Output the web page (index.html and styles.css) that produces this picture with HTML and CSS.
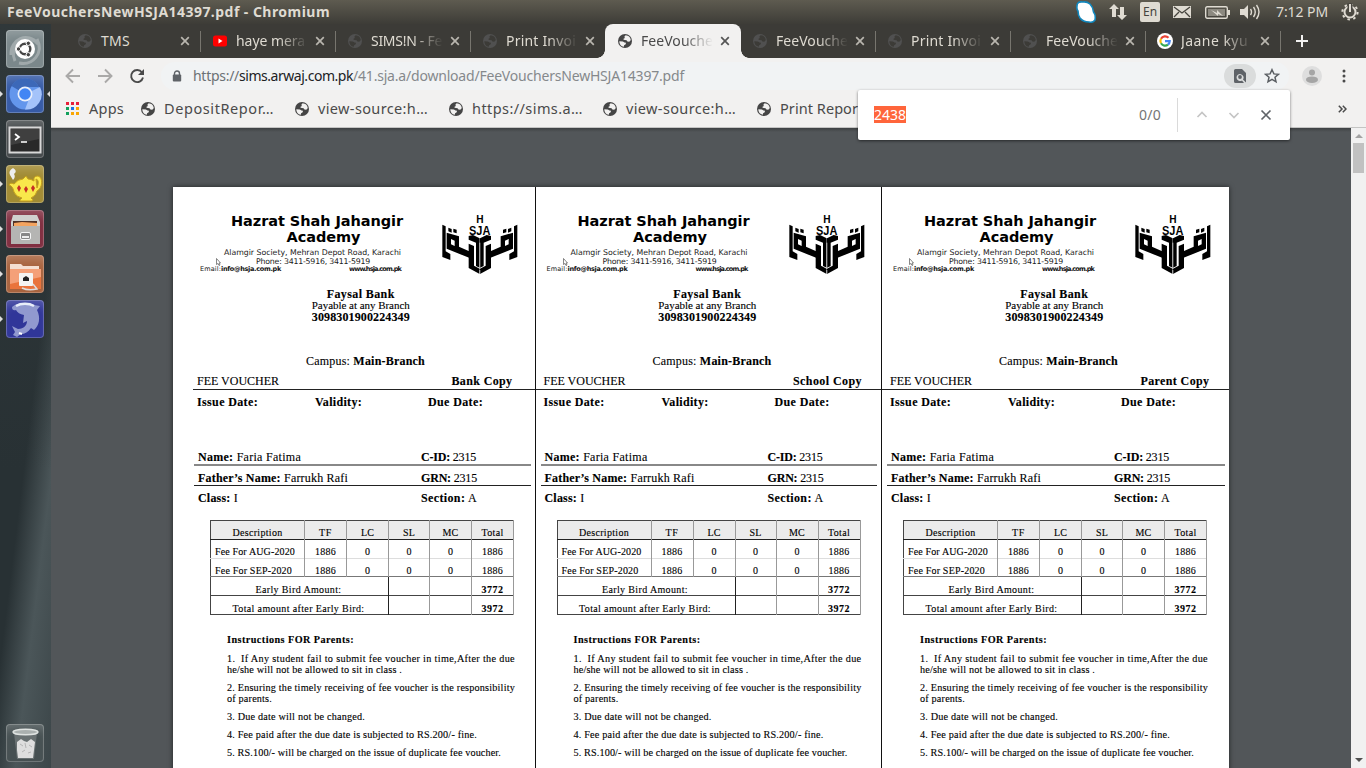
FILE: index.html
```html
<!DOCTYPE html>
<html lang="en">
<head>
<meta charset="utf-8">
<title>FeeVouchersNewHSJA14397.pdf - Chromium</title>
<link rel="stylesheet" href="styles.css">
</head>
<body>
<svg class="defs" width="0" height="0">
  <symbol id="globe" viewBox="0 0 14 14"><circle cx="7" cy="7" r="7" fill="currentColor"/><path d="M7.600 1.200 6.200 3l.9 1.100-1.400.5-.2 1.200 3 .4 1.300 1.600 1.900-.3 1.100-1.600A5.600 5.600 0 0 0 7.600 1.200zM1.300 7.200l3.600.2 1.600 1 1.500.3-.3 1.600-1.600.9-.2 1.600A5.600 5.600 0 0 1 1.300 7.200z" class="globe-land"/></symbol>
  <symbol id="close" viewBox="0 0 10 10"><path d="M1.200 1.200l7.600 7.600M8.800 1.200L1.200 8.800" fill="none" stroke="currentColor" stroke-width="1.700"/></symbol>
  <symbol id="logo" viewBox="36 26 228 180">
    <g id="half">
      <path d="M37 58l10 5v75l14 8v18l-24-9z"/>
      <path fill-rule="evenodd" d="M50 82l37 11v31l34 15v20L50 130zm13 19v16l11 5v-16z"/>
      <path d="M55 67l10 4v11l-10-4zM70 70l10 3v11l-10-3z"/>
      <path d="M116 92l13-3 20 10v88l-11-5v-70l-22-9zM116 115l16 7v59l17 9v16l-33-18z"/>
    </g>
    <use href="#half" transform="translate(299 0) scale(-1 1)"/>
    <path d="M149.500 112v75M149.500 194v12" stroke="#fff" stroke-width="2"/>
    <text x="150" y="53" text-anchor="middle" font-size="32" textLength="22" lengthAdjust="spacingAndGlyphs">H</text>
    <text x="149" y="89" text-anchor="middle" font-size="36" textLength="64" lengthAdjust="spacingAndGlyphs">SJA</text>
  </symbol>
</svg>

<header class="panel">
  <span class="panel-title"><span data-w="323">FeeVouchersNewHSJA14397.pdf - Chromium</span></span>
  <div class="indicators">
    <svg width="22" height="22" viewBox="0 0 22 22"><path d="M2 5Q2 0 8 1q4-.5 7 2 3 3 3.500 8 2.500 3 1.500 8-2 3-6 2-6 0-9-4-2-3-2-7-1.500-2-1-5z" fill="#fff" stroke="#1287bd" stroke-width="1.600"/></svg>
    <svg width="18" height="18" viewBox="0 0 18 18" fill="#dfdbd2"><path d="M5 1l5 5H7v8H3V6H0zM13 17l-5-5h3V4h4v8h3z"/></svg>
    <span class="keyboard">En</span>
    <svg width="18" height="12" viewBox="0 0 18 12"><path fill="#dfdbd2" d="M0 0h18v12H0z"/><path d="M1 1l8 6 8-6M1 11l5-5M17 11l-5-5" fill="none" stroke="#45433d" stroke-width="1.300"/></svg>
    <svg width="25" height="13" viewBox="0 0 25 13"><rect x=".7" y=".7" width="21.600" height="11.600" rx="1.500" fill="none" stroke="#dfdbd2" stroke-width="1.400"/><path fill="#8c8980" d="M3 3h17v7H3z"/><path fill="#dfdbd2" d="M23 4h2v5h-2zM6 4l6 3v-3l6 6-5-2v2z"/></svg>
    <svg width="21" height="16" viewBox="0 0 21 16"><path d="M0 5h4l4-4v14l-4-4H0z" fill="#dfdbd2"/><path d="M10.500 5q2 3 0 6M13.500 3q3.500 5 0 10M16.500 1q5 7 0 14" fill="none" stroke="#dfdbd2" stroke-width="1.400"/></svg>
    <span class="clock"><span data-w="52">7:12 PM</span></span>
    <svg width="18" height="18" viewBox="0 0 18 18" fill="none" stroke="#dfdbd2"><circle cx="9" cy="9" r="5.500" stroke-width="2"/><circle cx="9" cy="9" r="7.600" stroke-width="2" stroke-dasharray="2.500 3.470"/><path d="M9 0v9" stroke="#4b4942" stroke-width="5"/><path d="M9 1v8" stroke-width="2"/></svg>
  </div>
</header>

<div class="desktop">
  <nav class="launcher">
    <div class="tile dash"><svg viewBox="0 0 38 38"><path d="M5 25C4 9 22 1 32 14M9 31C3 18 15 5 29 11M31 9c7 14-4 27-18 24" fill="none" stroke="#b9c0c1" stroke-width="3" opacity=".6"/><circle cx="19" cy="19" r="10" fill="#fff"/><circle cx="19" cy="19" r="5.300" fill="none" stroke="#444" stroke-width="2.400"/><g fill="#444" stroke="#fff"><circle cx="12.500" cy="19" r="2.200"/><circle cx="22.300" cy="13.300" r="2.200"/><circle cx="22.300" cy="24.700" r="2.200"/></g></svg></div>
    <div class="tile chromium running focused"><svg viewBox="0 0 38 38"><circle cx="19" cy="19" r="15.500" fill="#6396ec"/><path d="M19 19L5.500 11A15.500 15.500 0 0 1 33 12H19z" fill="#3c68b8"/><path d="M26 16l8-4a15.500 15.500 0 0 1-15 22.500z" fill="#a4c3fa"/><circle cx="19" cy="19" r="7.500" fill="#e9effb"/><circle cx="19" cy="19" r="5.800" fill="#4285f4"/></svg></div>
    <div class="tile terminal"><svg viewBox="0 0 38 38"><rect x="3.500" y="7.500" width="31" height="25" fill="#292929" stroke="#d8d8d8" stroke-width="2"/><path d="M5 9h28v10L5 25z" fill="#555" opacity=".5"/><path d="M9 14l4 3-4 3M15 22h6" fill="none" stroke="#fff" stroke-width="1.700"/></svg></div>
    <div class="tile teapot running"><svg viewBox="0 0 38 38"><path d="M7 3q-5 3-3 7l3 5q3-3 1-6 4-3-1-6z" fill="#eee"/><path d="M8 19q-4-2-5 1 4 1 5 7 2 5 8 6-4 3-1 3h11q2-1-1-3 5-2 6-7c6-3 6-14 1-15q-5 0-4 5-3-2-6-2l-2-3-3 3q-5 0-9 5zM30 14q4 1 1 9z" fill="#f9e84b" stroke="#c7a01c" fill-rule="evenodd"/><path d="M11 23l2-3 2 3-2 4zM18 24l2-3 2 3-2 4zM25 23l2-3 2 3-2 4z" fill="#c62e25"/></svg></div>
    <div class="tile files running"><svg viewBox="0 0 38 38"><path d="M7 5h24l3 7v22H5V12z" fill="#d0d0ce"/><path d="M7 11h24v7H7z" fill="#4e3026"/><path d="M8 13l8-1 15 1v5H8z" fill="#f4a460"/><path d="M5 16h29v18H5z" fill="#b5b5b3"/><rect x="14.500" y="22.500" width="10" height="7" rx="1.500" fill="#888" stroke="#f6f6f6"/><path d="M16 26h7v2h-7z" fill="#eee"/></svg></div>
    <div class="tile folder running"><svg viewBox="0 0 38 38"><path d="M4 9h11l2 2h16v7H4z" fill="#f5dfd2"/><path d="M4 14h31v20H4z" fill="#e9743c"/><path d="M4 14h31v8L4 29z" fill="#f4a078"/><rect x="13" y="18" width="14" height="13" rx="1" fill="#f4f4f2"/><path d="M17 26v-3l3-2 3 2v3z" fill="#222"/><path d="M16 33q6 3 15 1l-4-5" fill="none" stroke="#ddd" stroke-width="1.500"/></svg></div>
    <div class="tile dolphin running"><svg viewBox="0 0 38 38"><path d="M6 7C11 2 22 2 28 5l6 1-3 4c4 8 2 16-3 20l-3-2c-3 4-6 6-10 6l-4 3-4-2 2-3-3-6 6 3c6 0 9-4 9-8l-4 2 1-8q-6-1-8-5-4 1-4-3z" fill="#9199cf"/><path d="M10 6c5-3 13-3 18 0" fill="none" stroke="#e9eef9" stroke-width="2.500"/><path d="M13 33l3 1" stroke="#fff" stroke-width="2"/></svg></div>
    <div class="tile trash"><svg viewBox="0 0 38 38"><path d="M8 9h23l-3 26H11z" fill="#777f80" opacity=".7"/><path d="M11 18l4-3 3 2 3 1 4-3 4 3-1 8-1 8H12l-1-8z" fill="#dedede"/><path d="M14 20l3 2M16 28l3-2M23 21l3 2M22 29l3-1M19 19l1 5" fill="none" stroke="#b5b5b5"/><ellipse cx="19.500" cy="8" rx="12.500" ry="2.800" fill="#aab0af" stroke="#dfe3e1" stroke-width="1.500"/></svg></div>
  </nav>

  <main class="browser">
    <div class="tabs">
      <div class="tab"><svg class="icon"><use href="#globe"/></svg><span class="tab-label"><span data-w="29">TMS</span></span><svg class="x"><use href="#close"/></svg></div>
      <div class="tab"><svg class="icon" viewBox="0 0 14 14"><rect y="1.500" width="14" height="11" rx="2.500" fill="#f00"/><path d="M5.500 4.500v5l4-2.500z" fill="#fff"/></svg><span class="tab-label"><span data-w="69">haye mera</span></span><svg class="x"><use href="#close"/></svg></div>
      <div class="tab"><svg class="icon"><use href="#globe"/></svg><span class="tab-label"><span data-w="71">SIMS!N - Fe</span></span><svg class="x"><use href="#close"/></svg></div>
      <div class="tab no-line"><svg class="icon"><use href="#globe"/></svg><span class="tab-label"><span data-w="70">Print Invoi</span></span><svg class="x"><use href="#close"/></svg></div>
      <div class="tab active"><svg class="icon"><use href="#globe"/></svg><span class="tab-label"><span data-w="72">FeeVouche</span></span><svg class="x"><use href="#close"/></svg></div>
      <div class="tab"><svg class="icon"><use href="#globe"/></svg><span class="tab-label"><span data-w="72">FeeVouche</span></span><svg class="x"><use href="#close"/></svg></div>
      <div class="tab"><svg class="icon"><use href="#globe"/></svg><span class="tab-label"><span data-w="70">Print Invoi</span></span><svg class="x"><use href="#close"/></svg></div>
      <div class="tab"><svg class="icon"><use href="#globe"/></svg><span class="tab-label"><span data-w="72">FeeVouche</span></span><svg class="x"><use href="#close"/></svg></div>
      <div class="tab"><svg class="icon google" viewBox="0 0 16 16"><circle cx="8" cy="8" r="8" fill="#fff"/><g fill="none" stroke-width="2.200"><path d="M4 5.700A4.700 4.700 0 0 1 11.500 4.800" stroke="#ea4335"/><path d="M4 5.700a4.700 4.700 0 0 0 0 4.600" stroke="#fbbc05"/><path d="M4 10.300a4.700 4.700 0 0 0 7 1.300" stroke="#34a853"/><path d="M8 8.200h4.700a4.700 4.700 0 0 1-1.700 3.400" stroke="#4285f4"/></g></svg><span class="tab-label"><span data-w="67">Jaane kyu</span></span><svg class="x"><use href="#close"/></svg></div>
      <svg class="new-tab" viewBox="0 0 12 12"><path d="M6 0v12M0 6h12" stroke="#f2f1f0" stroke-width="2"/></svg>
    </div>

    <div class="toolbar">
      <svg class="nav-icon dim" viewBox="0 0 16 16"><path d="M15 8H2M8 1.500L1.500 8 8 14.500"/></svg>
      <svg class="nav-icon dim" viewBox="0 0 16 16"><path d="M1 8h13M8 1.500L14.500 8 8 14.500"/></svg>
      <svg class="nav-icon" viewBox="0 0 16 16"><path d="M13 4.500A6 6 0 1 0 14 9.500"/><path d="M15 1v6H9z" class="solid"/></svg>
      <div class="omnibox">
        <svg width="10" height="12" viewBox="0 0 10 12"><path d="M2.500 5V3.500a2.500 2.500 0 0 1 5 0V5" fill="none" stroke="#5f6368" stroke-width="1.400"/><rect x=".8" y="4.500" width="8.400" height="7" rx="1" fill="#5f6368"/></svg>
        <span class="url"><span class="scheme" data-w="46">https://</span><span class="host" data-w="114">sims.arwaj.com.pk</span><span class="path" data-w="331">/41.sja.a/download/FeeVouchersNewHSJA14397.pdf</span></span>
        <span class="find-pill"><svg width="12" height="14" viewBox="0 0 12 14"><path d="M1.500 0H8l4 4v9.500l-3-3a3.500 3.500 0 1 0-1 1L10 14H1.500Q0 14 0 12.500v-11Q0 0 1.500 0z" fill="#5f6368"/><circle cx="6" cy="8" r="1.900" fill="#5f6368"/></svg></span>
        <svg width="16" height="16" viewBox="0 0 16 16"><path d="M8 1.700l1.900 4.200 4.500.4-3.400 3 1 4.500L8 11.400l-4 2.400 1-4.500-3.400-3 4.500-.4z" fill="none" stroke="#5a5e62" stroke-width="1.500"/></svg>
      </div>
      <svg class="avatar" viewBox="0 0 20 20"><circle cx="10" cy="10" r="10" fill="#dedede"/><circle cx="10" cy="6.500" r="3" fill="#a5a5a5"/><ellipse cx="10" cy="13.700" rx="6" ry="3.300" fill="#a5a5a5"/></svg>
      <svg class="menu" viewBox="0 0 4 14" fill="#4a4a4a"><circle cx="2" cy="2" r="1.500"/><circle cx="2" cy="7" r="1.500"/><circle cx="2" cy="12" r="1.500"/></svg>
    </div>

    <div class="bookmarks">
      <div class="bookmark apps"><svg class="icon" viewBox="0 0 14 14"><path d="M0 0h3v3H0zM5 0h3v3H5zM10 0h3v3h-3z" fill="#e8203a"/><path d="M0 5h3v3H0zM0 10h3v3H0z" fill="#12a05c"/><path d="M5 5h3v3H5z" fill="#1a73e8"/><path d="M10 5h3v3h-3zM5 10h3v3H5zM10 10h3v3h-3z" fill="#f9a602"/></svg><span data-w="35">Apps</span></div>
      <div class="bookmark"><svg class="icon"><use href="#globe"/></svg><span data-w="110">DepositRepor…</span></div>
      <div class="bookmark"><svg class="icon"><use href="#globe"/></svg><span data-w="110">view-source:h…</span></div>
      <div class="bookmark"><svg class="icon"><use href="#globe"/></svg><span data-w="111">https://sims.a…</span></div>
      <div class="bookmark"><svg class="icon"><use href="#globe"/></svg><span data-w="110">view-source:h…</span></div>
      <div class="bookmark"><svg class="icon"><use href="#globe"/></svg><span data-w="78">Print Repor</span></div>
      <svg class="more" viewBox="0 0 9 8"><path d="M.8.8L4 4 .8 7.200M4.800.8L8 4 4.800 7.200" fill="none" stroke="#4a4a4a" stroke-width="1.500"/></svg>
    </div>

    <div class="find-bar">
      <span class="query" data-w="32">2438</span>
      <span class="count" data-w="22">0/0</span>
      <svg class="find-icon" viewBox="0 0 12 12"><path d="M1.500 8L6 3.500 10.500 8" stroke="#c5c5c5"/></svg>
      <svg class="find-icon" viewBox="0 0 12 12"><path d="M1.500 4L6 8.500 10.500 4" stroke="#c5c5c5"/></svg>
      <svg class="find-icon" viewBox="0 0 12 12"><path d="M1.500 1.500l9 9M10.500 1.500l-9 9" stroke="#5f6368"/></svg>
    </div>

    <div class="viewer">
      <div class="page" id="page"></div>
      <div class="scrollbar"><i class="up"></i><i class="thumb"></i><i class="down"></i></div>
    </div>
  </main>
</div>

<template id="voucher">
  <section class="voucher">
    <div class="letterhead">
      <div class="school">
        <h1><span data-w="172">Hazrat Shah Jahangir</span></h1>
        <h1 class="second"><span data-w="74">Academy</span></h1>
        <p class="address"><span data-w="177">Alamgir Society, Mehran Depot Road, Karachi</span></p>
        <p class="phone"><span data-w="114">Phone: 3411-5916, 3411-5919</span></p>
        <div class="contact"><span data-w="21">Email:</span><b data-w="60">info@hsja.com.pk</b><b class="site" data-w="52">www.hsja.com.pk</b>
          <svg class="cursor" viewBox="0 0 5 8"><path d="M.5.5v6l1.500-1 1 2 1-.5-1-2h1.500z" fill="#fff" stroke="#555" stroke-width=".7"/></svg></div>
      </div>
      <svg class="logo"><use href="#logo"/></svg>
    </div>
    <div class="bank">
      <b data-w="68">Faysal Bank</b>
      <span class="payable" data-w="98">Payable at any Branch</span>
      <b data-w="98">3098301900224349</b>
    </div>
    <div class="campus"><span data-w="119">Campus: <b>Main-Branch</b></span></div>
    <div class="heading"><span data-w="82">FEE VOUCHER</span><b class="copy"></b></div>
    <div class="dates"><b data-w="61">Issue Date:</b><b data-w="47">Validity:</b><b data-w="55">Due Date:</b></div>
    <div class="student">
      <div><span data-w="103"><b>Name:</b> Faria Fatima</span></div><div><span data-w="55"><b>C-ID:</b> 2315</span></div>
    </div>
    <div class="student father">
      <div><span data-w="150"><b>Father’s Name:</b> Farrukh Rafi</span></div><div><span data-w="56"><b>GRN:</b> 2315</span></div>
    </div>
    <div class="student class-row">
      <div><span data-w="40"><b>Class:</b> I</span></div><div><span data-w="56"><b>Section:</b> A</span></div>
    </div>
    <table class="fees">
      <colgroup><col class="c-desc"><col class="c-num"><col class="c-num"><col class="c-sl"><col class="c-num"><col class="c-num"></colgroup>
      <tr class="head"><td><span data-w="50">Description</span></td><td><span data-w="13">TF</span></td><td><span data-w="13">LC</span></td><td><span data-w="12">SL</span></td><td><span data-w="16">MC</span></td><td><span data-w="22">Total</span></td></tr>
      <tr class="month"><td><span data-w="80">Fee For AUG-2020</span></td><td><span data-w="21">1886</span></td><td>0</td><td>0</td><td>0</td><td><span data-w="21">1886</span></td></tr>
      <tr class="month last"><td><span data-w="77">Fee For SEP-2020</span></td><td><span data-w="21">1886</span></td><td>0</td><td>0</td><td>0</td><td><span data-w="21">1886</span></td></tr>
      <tr class="sum"><td colspan="3"><span data-w="86">Early Bird Amount:</span></td><td></td><td></td><td><b data-w="22">3772</b></td></tr>
      <tr class="sum"><td colspan="3"><span data-w="132">Total amount after Early Bird:</span></td><td></td><td></td><td><b data-w="22">3972</b></td></tr>
    </table>
    <div class="instructions">
      <h2><span data-w="127">Instructions FOR Parents:</span></h2>
      <p><span data-w="288">1.&nbsp; If Any student fail to submit fee voucher in time,After the due</span><br><span data-w="175">he/she will not be allowed to sit in class .</span></p>
      <p><span data-w="288">2. Ensuring the timely receiving of fee voucher is the responsibility</span><br><span data-w="45">of parents.</span></p>
      <p><span data-w="138">3. Due date will not be changed.</span></p>
      <p><span data-w="250">4. Fee paid after the due date is subjected to RS.200/- fine.</span></p>
      <p><span data-w="274">5. RS.100/- will be charged on the issue of duplicate fee voucher.</span></p>
    </div>
  </section>
</template>
<script src="main.js"></script>
</body>
</html>
```
FILE: main.js
```js
// One voucher per recipient, each with its own copy label and label width.
const copies = [["Bank Copy", 61], ["School Copy", 69], ["Parent Copy", 69]];
const page = document.getElementById("page");
const template = document.getElementById("voucher");

for (const [label, width] of copies) {
  const voucher = template.content.cloneNode(true);
  const copy = voucher.querySelector(".copy");
  copy.textContent = label;
  copy.dataset.w = width;
  page.append(voucher);
}

// Track each label out to its measured width.
function track() {
  for (const el of document.querySelectorAll("[data-w]")) {
    el.style.letterSpacing = "0px";
    const range = document.createRange();
    range.selectNodeContents(el);
    const natural = range.getBoundingClientRect().width;
    const spacing = (Number(el.dataset.w) - natural) / el.textContent.length;
    el.style.letterSpacing = spacing.toFixed(3) + "px";
  }
}
track();
```
FILE: styles.css
```css
* { box-sizing: border-box; }
body {
  margin: 0; width: 1366px; height: 768px; overflow: hidden;
  font-family: "Noto Sans", "Open Sans", sans-serif; font-size: 14px; color: #4a4a4a;
}
svg { display: block; flex: none; }
h1, h2, p { margin: 0; }
[data-w] { white-space: nowrap; }
.defs { position: absolute; }

/* System panel */
.panel {
  height: 24px; padding: 0 7px; display: flex; justify-content: space-between; align-items: center;
  background: linear-gradient(#5e5b50, #3d3c37); color: #dfdbd2;
}
.panel-title { font-weight: 700; font-size: 14px; line-height: 22px; }
.indicators { display: flex; align-items: center; }
.indicators > :nth-child(1) { margin-right: 12px; }
.indicators > :nth-child(2) { margin-right: 13px; }
.indicators > :nth-child(4) { margin: 0 14px 0 13px; }
.indicators > :nth-child(6) { margin: 0 15px 0 10px; }
.indicators > :nth-child(8) { margin-left: 13px; }
.keyboard {
  width: 20px; height: 20px; border-radius: 2px; background: #dfdbd2; color: #45433d;
  font-size: 12px; line-height: 20px; text-align: center;
}
.clock { width: 52px; line-height: 24px; }

.desktop { display: flex; height: 744px; }

/* Launcher */
.launcher {
  width: 51px; padding: 6px 0 6px 6px; display: flex; flex-direction: column; gap: 7px;
  background:
    linear-gradient(#30383a, #30383a00 60%),
    linear-gradient(97deg, #283134 55%, #4b5659 75%, #3c4649);
}
.tile {
  position: relative; width: 38px; height: 38px; border-radius: 4px;
  box-shadow: inset 0 0 0 1px #ffffff38, inset 0 8px 8px -3px #ffffff30;
}
.tile svg { width: 38px; height: 38px; }
.dash { background: #7b888b; }
.chromium { background: #365ba6; }
.terminal { background: #454a4c; }
.teapot { background: #a18b33; }
.files { background: #802e40; }
.folder { background: #a8633e; }
.dolphin { background: #303699; }
.trash { margin-top: auto; background: #465052; }
.running::before, .focused::after {
  content: ""; position: absolute; top: 16px; border: 3px solid transparent;
}
.running::before { left: -6px; border-left-color: #dedede; border-right-width: 0; }
.focused::after { right: -6px; border-right-color: #dedede; border-left-width: 0; }

.browser { position: relative; flex: 1; display: flex; flex-direction: column; min-width: 0; }

/* Tab strip */
.tabs { --land: #3c3b37; height: 34px; padding-left: 14px; display: flex; align-items: center; background: #3c3b37; color: #dfdbd2; }
.tab { position: relative; width: 135px; height: 34px; padding: 0 10px 0 13px; display: flex; align-items: center; }
.tab::after { content: ""; position: absolute; right: -1px; top: 7px; width: 1px; height: 21px; background: #77756e; }
.tab.no-line::after, .tab.active::after { display: none; }
.icon { width: 14px; height: 14px; color: #505050; }
.tab .icon { margin-right: 9px; }
.tab .google { width: 16px; height: 16px; margin: 0 8px 0 -1px; }
.globe-land { fill: var(--land); }
.tab.active .icon, .bookmark .icon { color: #454545; }
.tab-label {
  width: 73px; font-size: 14px; line-height: 20px;
  -webkit-mask-image: linear-gradient(90deg, #000 42px, transparent 72px);
  mask-image: linear-gradient(90deg, #000 42px, transparent 72px);
}
.tab:first-child .tab-label { -webkit-mask-image: none; mask-image: none; }
.x { width: 10px; height: 10px; margin-left: 6px; color: #b9b6af; }
.tab.active {
  --land: #f2f1f0; width: 136px; margin-right: -1px; border-radius: 8px 8px 0 0;
  background: #f2f1f0; color: #4a4a4a;
}
.active .x { color: #555; }
.tab.active::before {
  content: ""; position: absolute; left: -8px; right: -8px; bottom: 0; height: 8px;
  background:
    radial-gradient(circle at 0 0, transparent 7.500px, #f2f1f0 8px) left / 8px 8px no-repeat,
    radial-gradient(circle at 100% 0, transparent 7.500px, #f2f1f0 8px) right / 8px 8px no-repeat;
}
.new-tab { width: 12px; height: 12px; margin-left: 16px; }

/* Toolbar */
.toolbar { height: 35px; padding: 0 19px 0 14px; display: flex; align-items: center; background: #f2f1f0; }
.nav-icon { width: 16px; height: 16px; margin-right: 16px; fill: none; stroke: #4a4a4a; stroke-width: 1.900; }
.nav-icon.dim { stroke: #aaa9a8; }
.nav-icon .solid { fill: #4a4a4a; stroke: none; }
.omnibox {
  height: 28px; width: 1128px; padding: 0 9px 0 11px; border-radius: 14px;
  display: flex; align-items: center; background: #f1f3f4;
}
.url { flex: 1; margin-left: 11px; display: flex; line-height: 22px; color: #85898c; }
.scheme { color: #6c7175; }
.host { color: #202124; }
.find-pill {
  width: 32px; height: 24px; margin-right: 8px; border-radius: 12px; background: #dadcdc;
  display: flex; align-items: center; justify-content: center;
}
.avatar { width: 20px; height: 20px; margin-left: 13px; }
.menu { width: 4px; height: 14px; margin-left: 20px; }

/* Bookmarks bar */
.bookmarks {
  --land: #f2f1f0;
  height: 35px; padding: 0 19px 3px 15px; display: flex; align-items: center; background: #f2f1f0;
  border-bottom: 1px solid #c4c4c3; font-size: 14.500px;
}
.bookmark { width: 154px; display: flex; align-items: center; gap: 9px; line-height: 20px; }
.bookmark > span { margin-top: -1px; }
.bookmark.apps { width: 75px; }
.more { width: 9px; height: 8px; margin-left: auto; }

/* Find-in-page popup */
.find-bar {
  position: absolute; z-index: 2; left: 807px; top: 66px; width: 432px; height: 50px; padding: 0 18px 0 16px;
  display: flex; align-items: center; background: #fff; border-radius: 2px; box-shadow: 0 1px 3px #0008;
}
.query { margin-bottom: 1px; background: #ff653b; color: #fff; line-height: 17px; }
.count { margin: 0 0 1px auto; color: #757575; }
.find-icon { width: 12px; height: 12px; margin-left: 20px; fill: none; stroke-width: 1.700; }
.count + .find-icon { box-sizing: content-box; height: 12px; margin-left: 16px; padding: 11px 0 11px 18px; border-left: 1px solid #dadada; }

/* Document viewer */
.viewer {
  flex: 1; min-height: 0; display: flex; justify-content: flex-end; overflow: hidden;
  background: linear-gradient(#3e4143, #525659 4px);
}
.page {
  width: 1056px; height: 600px; margin: 59px 122px 0 0; padding-left: 16px; display: flex; flex: none;
  background: #fff; color: #000; box-shadow: 0 0 5px #0009;
  font-family: "Liberation Serif", serif; font-size: 12px; -webkit-text-stroke: .12px #000;
}
.voucher { width: 346.500px; flex: none; border-right: 1px solid #111; }
.voucher:last-child { border-right: 0; }

.letterhead { height: 101.500px; display: flex; font-family: "DejaVu Sans", sans-serif; -webkit-text-stroke: 0; }
.school { width: 244px; padding: 26px 0 0 11px; }
.school h1 { width: 234px; font-size: 14.500px; line-height: 16px; text-align: center; }
.school .second { padding-left: 13px; }
.school p { font-size: 7.800px; line-height: 9px; color: #222; }
.school .address { margin-top: 3px; padding-left: 24px; }
.school .phone { padding-left: 56px; }
.contact { position: relative; display: flex; font-size: 6.500px; line-height: 7px; color: #111; }
.site { margin-left: 68px; }
.cursor { position: absolute; left: 16px; top: -8px; width: 5px; height: 8px; }
.logo { width: 76px; height: 60px; margin: 27px 0 0 9px; font-family: "Liberation Sans", sans-serif; font-weight: 700; }

.bank { padding-right: 2px; display: flex; flex-direction: column; align-items: center; line-height: 11.500px; }
.payable { font-size: 11px; }
.campus { margin-top: 30px; padding-left: 117px; line-height: 16px; }
.heading {
  height: 21px; padding: 4px 19px 0 8px; display: flex; justify-content: space-between;
  line-height: 16px; border-bottom: 1px solid #222;
}
.voucher:first-child .heading { margin-left: 4px; padding: 4px 22px 0 4px; }
.dates { height: 60px; padding: 4px 0 0 8px; display: grid; grid-template-columns: 118px 113px auto; line-height: 16px; }
.student {
  height: 16px; margin: 0 4px 0 5px; padding-left: 4px; display: grid; grid-template-columns: 223px auto;
  line-height: 14px; border-bottom: 2px solid #888;
}
.student.father { height: 20px; padding-top: 5px; border-bottom: 1px solid #222; }
.student.class-row { height: 19px; padding-top: 5px; border: 0; }

.fees {
  width: 304px; margin: 15px 0 0 21px; table-layout: fixed; border-collapse: collapse;
  border: 1px solid #444; font-size: 10px; text-align: center; line-height: 11px;
}
.c-desc { width: 94px; }
.c-num { width: 42px; }
.c-sl { width: 41px; }
.fees td { height: 18.800px; padding: 6px 0 0; border: 0 solid #999; border-right-width: 1px; }
.fees .head { background: #ebebeb; border-bottom: 1px solid #222; }
.fees .month { border-bottom: 1px solid #ddd; }
.fees .month.last { border-bottom-color: #777; }
.fees .month td:first-child { padding-left: 4px; text-align: left; }
.fees .sum { border-bottom: 1px solid #444; }
.fees .sum td:first-child { padding-right: 2px; border-right-color: #222; }

.instructions { width: 290px; margin: 19.500px 0 0 38px; font-size: 10.200px; line-height: 10.600px; }
.instructions h2 { margin-bottom: 8px; font-size: 10.200px; line-height: 12px; }
.instructions p { margin-bottom: 7.500px; }

/* Scrollbar */
.scrollbar {
  width: 15px; padding: 6px 2px; display: flex; flex-direction: column; align-items: center; background: #f1f1f1;
}
.up, .down { border: 4px solid transparent; }
.up { border-top: 0; border-bottom-color: #a3a3a3; }
.thumb { width: 11px; height: 30px; margin-top: 5px; background: #c1c1c1; }
.down { margin-top: auto; border-bottom: 0; border-top-color: #505050; }
```
